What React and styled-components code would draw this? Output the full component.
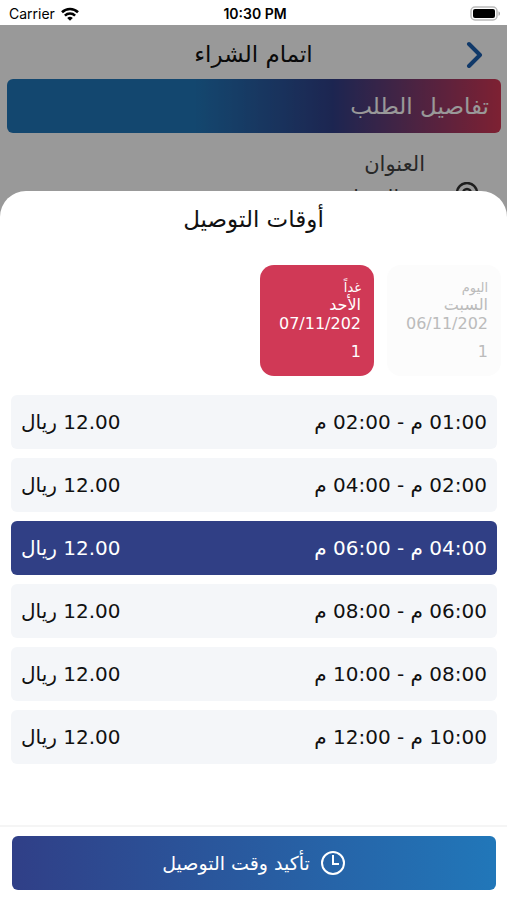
import React, { useState } from "react";
import styled, { createGlobalStyle } from "styled-components";

const DAYS = [
  { id: "today", label: "اليوم", name: "السبت", date: "06/11/202", rest: "1", disabled: true },
  { id: "tomorrow", label: "غداً", name: "الأحد", date: "07/11/202", rest: "1" },
];

const SLOTS = [
  { from: "01:00", to: "02:00", price: "12.00" },
  { from: "02:00", to: "04:00", price: "12.00" },
  { from: "04:00", to: "06:00", price: "12.00" },
  { from: "06:00", to: "08:00", price: "12.00" },
  { from: "08:00", to: "10:00", price: "12.00" },
  { from: "10:00", to: "12:00", price: "12.00" },
];

const StatusBar = () => (
  <StatusBar.Container dir="ltr">
    <StatusBar.Carrier>
      Carrier
      <svg width="18" height="14" viewBox="0 0 18 14" aria-hidden="true">
        <g fill="none" stroke="#000" strokeWidth="2.6">
          <path d="M1 5.2a11.5 11.5 0 0 1 16 0" />
          <path d="M3.9 8.6a7.4 7.4 0 0 1 10.2 0" />
        </g>
        <path d="M6.2 10.9a4.2 4.2 0 0 1 5.6 0L9 13.8z" fill="#000" />
      </svg>
    </StatusBar.Carrier>
    <StatusBar.Time>10:30 PM</StatusBar.Time>
    <StatusBar.Battery>
      <svg width="31" height="15" viewBox="0 0 31 15" aria-hidden="true">
        <rect x="1" y="1" width="26" height="13" rx="4" fill="#fff" stroke="#bbb" strokeWidth="1.5" />
        <rect x="3" y="3" width="22" height="9" rx="2" fill="#000" />
        <path d="M28.5 5.2c2 .8 2 3.8 0 4.6z" fill="#aaa" />
      </svg>
    </StatusBar.Battery>
  </StatusBar.Container>
);

const Checkout = () => (
  <Checkout.Container>
    <Checkout.Header>
      <Checkout.Back type="button" aria-label="رجوع">
        <svg width="18" height="28" viewBox="0 0 18 28" aria-hidden="true">
          <path
            d="M3 4l11 11L3 26"
            fill="none"
            stroke="#1c5fb0"
            strokeWidth="4"
            strokeLinecap="round"
            strokeLinejoin="round"
          />
        </svg>
      </Checkout.Back>
      <Checkout.Title>اتمام الشراء</Checkout.Title>
    </Checkout.Header>
    <Checkout.Banner>تفاصيل الطلب</Checkout.Banner>
    <Checkout.Address>
      <Checkout.Label>العنوان</Checkout.Label>
      <Checkout.Place>
        <svg width="24" height="30" viewBox="0 0 24 30" aria-hidden="true">
          <g fill="none" stroke="#333" strokeWidth="2.4">
            <path d="M12 28C5 20 2 16 2 11a10 10 0 0 1 20 0c0 5-3 9-10 17z" />
            <circle cx="12" cy="11" r="4" />
          </g>
        </svg>
        <span>المنزل</span>
      </Checkout.Place>
    </Checkout.Address>
  </Checkout.Container>
);

const DeliveryTimes = () => {
  const [day, setDay] = useState("tomorrow");
  const [slot, setSlot] = useState(2);

  return (
    <Sheet role="dialog" aria-labelledby="sheet-title">
      <Sheet.Title id="sheet-title">أوقات التوصيل</Sheet.Title>
      <Days>
        {DAYS.map((d) => (
          <Day
            key={d.id}
            type="button"
            disabled={d.disabled}
            $active={d.id === day}
            onClick={() => setDay(d.id)}
          >
            <Day.Label>{d.label}</Day.Label>
            <Day.Name>{d.name}</Day.Name>
            <Day.Date>
              {d.date}
              <br />
              {d.rest}
            </Day.Date>
          </Day>
        ))}
      </Days>
      <Slots>
        {SLOTS.map((s, i) => (
          <Slot
            key={s.from}
            type="button"
            aria-pressed={i === slot}
            $active={i === slot}
            onClick={() => setSlot(i)}
          >
            <span>
              {s.from} م - {s.to} م
            </span>
            <span>{s.price} ريال</span>
          </Slot>
        ))}
      </Slots>
      <Sheet.Footer>
        <Confirm type="button">
          <svg width="26" height="26" viewBox="0 0 26 26" aria-hidden="true">
            <g fill="none" stroke="#fff" strokeWidth="2">
              <circle cx="13" cy="13" r="11" />
              <path d="M13 5v9h6" />
            </g>
          </svg>
          تأكيد وقت التوصيل
        </Confirm>
      </Sheet.Footer>
    </Sheet>
  );
};

const App = () => (
  <Screen dir="rtl" lang="ar">
    <GlobalStyle />
    <StatusBar />
    <Checkout />
    <Backdrop />
    <DeliveryTimes />
  </Screen>
);

const GlobalStyle = createGlobalStyle`
  * {
    box-sizing: border-box;
  }
  body {
    margin: 0;
    background-color: white;
  }
  button {
    font-family: inherit;
    border: none;
    cursor: pointer;
  }
`;

const Screen = styled.div`
  display: flex;
  flex-direction: column;
  min-height: 100vh;
  color: #111;
  font-family: "DejaVu Sans", sans-serif;
`;

StatusBar.Container = styled.div`
  position: relative;
  z-index: 2;
  display: grid;
  grid-template-columns: 1fr auto 1fr;
  align-items: center;
  height: 25px;
  padding: 2px 6px 0 9px;
  background-color: white;
  color: black;
  font-family: Inter, sans-serif;
  font-size: 14px;
`;
StatusBar.Carrier = styled.span`
  display: flex;
  align-items: center;
  gap: 6px;
`;
StatusBar.Time = styled.span`
  font-weight: 600;
`;
StatusBar.Battery = styled.span`
  display: flex;
  justify-content: flex-end;
`;

Checkout.Container = styled.main`
  flex: 1;
`;
Checkout.Header = styled.header`
  display: grid;
  grid-template-columns: 40px 1fr 40px;
  align-items: center;
  height: 54px;
  padding: 4px 12px 0;
`;
Checkout.Back = styled.button`
  display: flex;
  justify-content: center;
  padding: 0;
  background: none;
`;
Checkout.Title = styled.h1`
  margin: 0;
  text-align: center;
  font-size: 23px;
  font-weight: normal;
  line-height: 28px;
`;
Checkout.Banner = styled.h2`
  display: flex;
  align-items: center;
  height: 54px;
  margin: 0 6px 0 7px;
  padding: 0 12px;
  border-radius: 6px;
  background: linear-gradient(to left, #d23755, #303f87 34%, #2177b9 62%);
  color: white;
  font-size: 23px;
  font-weight: normal;
`;
Checkout.Address = styled.section`
  padding: 14px 28px;
  color: #444;
  font-size: 20px;
`;
Checkout.Label = styled.h3`
  margin: 0;
  padding: 0 54px;
  font-size: 21px;
  font-weight: normal;
  line-height: 34px;
`;
Checkout.Place = styled.div`
  display: flex;
  align-items: flex-start;
  gap: 56px;
  padding-top: 1px;
  line-height: 30px;
`;

const Backdrop = styled.div`
  position: fixed;
  inset: 25px 0 0;
  background-color: rgba(0, 0, 0, 0.4);
`;

const Sheet = styled.section`
  position: fixed;
  right: 0;
  bottom: 0;
  left: 0;
  z-index: 1;
  border-radius: 26px 26px 0 0;
  background-color: white;
`;
Sheet.Title = styled.h2`
  margin: 0;
  padding-top: 8px;
  text-align: center;
  font-size: 23px;
  font-weight: normal;
  line-height: 40px;
`;
Sheet.Footer = styled.footer`
  margin-top: 61px;
  padding: 9px 11px 10px 12px;
  border-top: 2px solid #f5f5f5;
`;

const Days = styled.div`
  display: flex;
  gap: 13px;
  padding: 26px 6px 19px;
`;
const Day = styled.button`
  display: flex;
  flex-direction: column;
  align-items: flex-start;
  width: 114px;
  height: 111px;
  padding: 15px 13px 0;
  border-radius: 14px;
  background-color: ${({ $active }) => ($active ? "#d03956" : "#fcfcfc")};
  color: ${({ $active }) => ($active ? "#fff" : "#bbb")};
  text-align: start;
`;
Day.Label = styled.span`
  font-size: 13px;
  line-height: 16px;
`;
Day.Name = styled.span`
  font-size: 16px;
  line-height: 18px;
`;
Day.Date = styled.span`
  font-size: 16px;
  line-height: 28px;
  margin-top: -4px;
`;

const Slots = styled.div`
  display: flex;
  flex-direction: column;
  gap: 9px;
  padding: 0 10px 0 11px;
`;
const Slot = styled.button`
  display: flex;
  align-items: center;
  justify-content: space-between;
  height: 54px;
  padding: 0 10px;
  border-radius: 6px;
  background-color: ${({ $active }) => ($active ? "#303f85" : "#f4f6f9")};
  color: ${({ $active }) => ($active ? "#fff" : "#111")};
  font-size: 20px;
`;

const Confirm = styled.button`
  display: flex;
  align-items: center;
  justify-content: center;
  gap: 10px;
  width: 100%;
  height: 54px;
  border-radius: 6px;
  background: linear-gradient(to right, #303f87, #2177b9);
  color: white;
  font-size: 19px;
`;

export default App;
